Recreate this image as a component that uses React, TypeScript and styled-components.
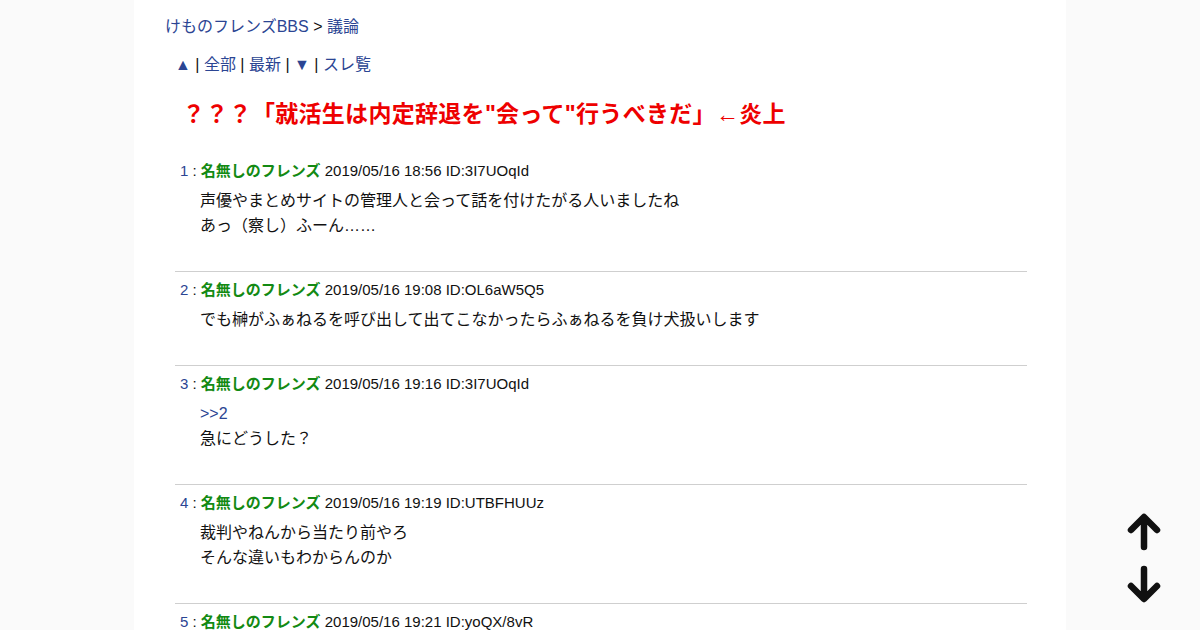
import styled, { createGlobalStyle } from "styled-components";

const GlobalStyle = createGlobalStyle`
  html, body {
    margin: 0;
    padding: 0;
    background: #fafafa;
    font-family: "Liberation Sans", Arial, "Noto Sans CJK JP", sans-serif;
    color: #111;
  }
`;

const Page = styled.div`
  width: 932px;
  margin: 0 auto;
  min-height: 630px;
  background: #fff;
  padding: 17px 30px 0 31px;
  box-sizing: border-box;
`;

const Link = styled.a`
  color: #2b4593;
  text-decoration: none;
  cursor: pointer;
`;

const Breadcrumb = styled.div`
  font-size: 16px;
  line-height: 20px;
`;

const Nav = styled.div`
  margin: 18px 0 0 10px;
  font-size: 16px;
  line-height: 20px;
`;

const Title = styled.h1`
  margin: 23px 0 0 17px;
  font-size: 23px;
  line-height: 32px;
  letter-spacing: 0.3px;
  font-weight: bold;
  color: #ee0000;
`;

const Posts = styled.div`
  margin: 31px 9px 0 10px;
`;

const Post = styled.div<{ $first?: boolean }>`
  padding: ${(p) => (p.$first ? "0" : "8px")} 0 33px;
  border-bottom: 1px solid #cfcfcf;
`;

const Head = styled.div`
  padding-left: 5px;
  font-size: 15px;
  line-height: 20px;
`;

const Num = styled.span`
  color: #2b4593;
`;

const Name = styled.b`
  color: #138a13;
`;

const Body = styled.div`
  margin-top: 7px;
  padding-left: 25px;
  font-size: 16px;
  line-height: 25px;
`;

const Arrows = styled.div`
  position: fixed;
  right: 38px;
  bottom: 27px;
  display: flex;
  flex-direction: column;
  gap: 14px;
`;

const ArrowButton = styled.button`
  width: 36px;
  height: 38px;
  padding: 0;
  border: none;
  background: none;
  cursor: pointer;
  display: flex;
  align-items: center;
  justify-content: center;
`;

type Post = {
  no: number;
  date: string;
  id: string;
  lines: { text: string; anchor?: boolean }[];
};

const posts: Post[] = [
  {
    no: 1,
    date: "2019/05/16 18:56",
    id: "3I7UOqId",
    lines: [
      { text: "声優やまとめサイトの管理人と会って話を付けたがる人いましたね" },
      { text: "あっ（察し）ふーん……" },
    ],
  },
  {
    no: 2,
    date: "2019/05/16 19:08",
    id: "OL6aW5Q5",
    lines: [{ text: "でも榊がふぁねるを呼び出して出てこなかったらふぁねるを負け犬扱いします" }],
  },
  {
    no: 3,
    date: "2019/05/16 19:16",
    id: "3I7UOqId",
    lines: [{ text: ">>2", anchor: true }, { text: "急にどうした？" }],
  },
  {
    no: 4,
    date: "2019/05/16 19:19",
    id: "UTBFHUUz",
    lines: [{ text: "裁判やねんから当たり前やろ" }, { text: "そんな違いもわからんのか" }],
  },
  {
    no: 5,
    date: "2019/05/16 19:21",
    id: "yoQX/8vR",
    lines: [{ text: "" }],
  },
];

const Arrow = ({ down }: { down?: boolean }) => (
  <svg width="34" height="38" viewBox="0 0 34 38" style={down ? { transform: "rotate(180deg)" } : undefined}>
    <path
      d="M17 34 V5 M4 17 L17 4 L30 17"
      fill="none"
      stroke="#111"
      strokeWidth="6.5"
      strokeLinecap="round"
      strokeLinejoin="round"
    />
  </svg>
);

export default function App() {
  return (
    <>
      <GlobalStyle />
      <Page>
        <Breadcrumb>
          <Link>けものフレンズBBS</Link> &gt; <Link>議論</Link>
        </Breadcrumb>
        <Nav>
          <Link>▲</Link> | <Link>全部</Link> | <Link>最新</Link> | <Link>▼</Link> |{" "}
          <Link>スレ覧</Link>
        </Nav>
        <Title>？？？「就活生は内定辞退を"会って"行うべきだ」←炎上</Title>
        <Posts>
          {posts.map((p, i) => (
            <Post key={p.no} $first={i === 0}>
              <Head>
                <Num>{p.no}</Num> : <Name>名無しのフレンズ</Name> {p.date} ID:{p.id}
              </Head>
              <Body>
                {p.lines.map((l, j) =>
                  l.anchor ? (
                    <div key={j}>
                      <Link>{l.text}</Link>
                    </div>
                  ) : (
                    <div key={j}>{l.text}</div>
                  )
                )}
              </Body>
            </Post>
          ))}
        </Posts>
      </Page>
      <Arrows>
        <ArrowButton>
          <Arrow />
        </ArrowButton>
        <ArrowButton>
          <Arrow down />
        </ArrowButton>
      </Arrows>
    </>
  );
}
